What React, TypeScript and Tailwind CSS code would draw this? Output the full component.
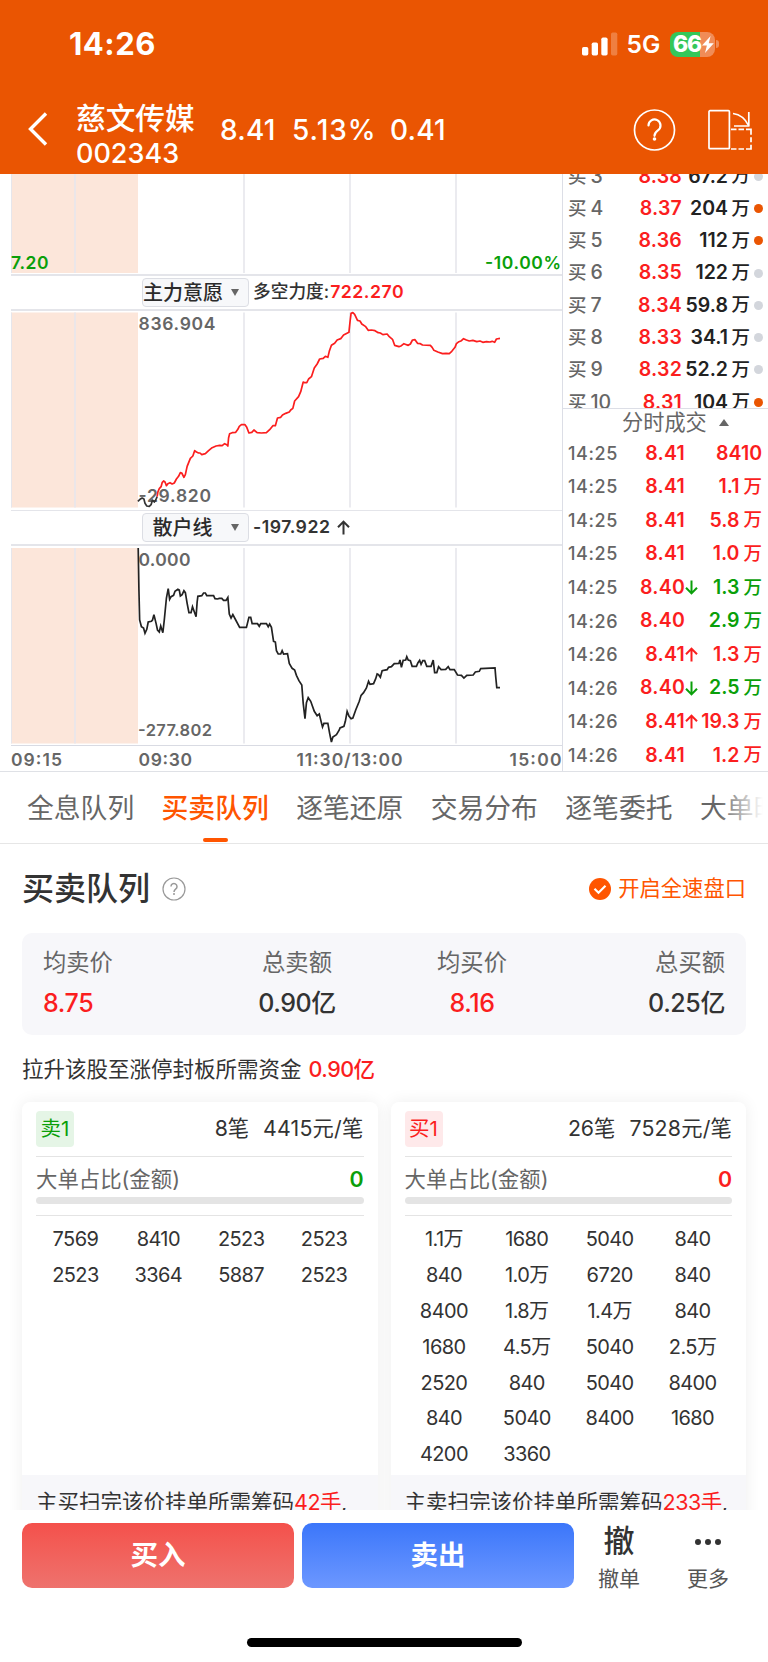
import type { ReactNode } from "react";
import clsx from "clsx";

const bids = [
  { level: 3, price: "8.38", volume: "67.2", hot: false },
  { level: 4, price: "8.37", volume: "204", hot: true },
  { level: 5, price: "8.36", volume: "112", hot: true },
  { level: 6, price: "8.35", volume: "122", hot: false },
  { level: 7, price: "8.34", volume: "59.8", hot: false },
  { level: 8, price: "8.33", volume: "34.1", hot: false },
  { level: 9, price: "8.32", volume: "52.2", hot: false },
  { level: 10, price: "8.31", volume: "104", hot: true },
];

type Trade = {
  time: string;
  price: string;
  volume: string;
  unit?: string;
  move?: "up" | "down";
  sell?: boolean;
};

const trades: Trade[] = [
  { time: "14:25", price: "8.41", volume: "8410" },
  { time: "14:25", price: "8.41", volume: "1.1", unit: "万" },
  { time: "14:25", price: "8.41", volume: "5.8", unit: "万" },
  { time: "14:25", price: "8.41", volume: "1.0", unit: "万" },
  { time: "14:25", price: "8.40", volume: "1.3", unit: "万", move: "down", sell: true },
  { time: "14:26", price: "8.40", volume: "2.9", unit: "万", sell: true },
  { time: "14:26", price: "8.41", volume: "1.3", unit: "万", move: "up" },
  { time: "14:26", price: "8.40", volume: "2.5", unit: "万", move: "down", sell: true },
  { time: "14:26", price: "8.41", volume: "19.3", unit: "万", move: "up" },
  { time: "14:26", price: "8.41", volume: "1.2", unit: "万" },
];

const tabs = ["全息队列", "买卖队列", "逐笔还原", "交易分布", "逐笔委托", "大单时序"];

const sellOrders = ["7569", "8410", "2523", "2523", "2523", "3364", "5887", "2523"];

const buyOrders = [
  "1.1万", "1680", "5040", "840",
  "840", "1.0万", "6720", "840",
  "8400", "1.8万", "1.4万", "840",
  "1680", "4.5万", "5040", "2.5万",
  "2520", "840", "5040", "8400",
  "840", "5040", "8400", "1680",
  "4200", "3360",
];

const mainForceLine =
  "440,590 442,576 446,566 451,560 454,548 458,543 462,546 466,557 470,551 476,548 482,552 488,549 494,537 500,529 505,518 509,519 515,532 519,524 524,499 533,475 540,468 545,452 550,456 556,459 560,459 565,464 575,461 584,452 594,443 605,438 615,436 622,437 629,431 635,434 638,438 640,414 643,401 650,398 660,397 666,388 670,379 676,374 686,374 691,382 697,399 705,397 711,390 720,398 732,399 746,398 755,389 764,377 771,377 777,354 786,352 791,345 800,340 810,336 814,330 820,325 825,303 836,290 842,275 849,246 853,248 859,248 864,237 872,230 880,204 888,192 895,177 905,175 911,169 918,172 922,154 928,136 937,130 944,120 954,116 962,105 977,97 980,66 983,40 988,38 993,43 1001,61 1008,63 1013,72 1024,80 1031,91 1040,90 1050,92 1059,98 1065,99 1072,104 1084,102 1090,110 1099,118 1105,136 1117,140 1124,137 1131,131 1138,134 1143,136 1149,132 1155,120 1162,119 1169,130 1177,131 1183,135 1205,136 1210,142 1215,151 1226,156 1239,161 1249,160 1258,161 1265,154 1274,142 1278,131 1285,125 1292,122 1298,116 1306,120 1314,123 1324,121 1335,125 1344,123 1352,127 1362,125 1372,126 1378,124 1385,127 1390,117 1400,115";

const retailLine =
  "387,114 389,240 391,330 396,350 402,354 406,370 411,358 415,336 424,334 427,330 431,314 437,340 441,360 446,366 450,348 456,368 460,330 466,264 471,236 475,268 479,260 486,256 490,244 498,238 502,240 505,258 510,254 515,242 519,248 524,280 529,308 535,308 539,290 543,302 549,320 552,276 554,259 565,257 570,249 575,249 579,257 598,257 602,266 609,267 614,265 621,265 626,271 633,271 638,262 642,312 647,324 652,314 660,330 671,352 690,352 697,322 702,322 706,341 721,341 726,349 730,341 746,341 751,350 755,342 760,352 766,394 771,396 774,422 779,432 786,432 790,422 794,432 805,431 810,460 818,475 825,480 830,496 837,512 845,525 849,580 854,626 858,578 863,563 870,574 880,604 888,617 894,612 899,634 903,651 907,640 918,640 923,670 928,696 932,681 942,674 950,660 952,654 963,649 967,634 972,604 977,618 983,626 988,624 996,600 1006,574 1011,556 1018,548 1026,534 1032,514 1036,523 1046,521 1052,506 1056,492 1060,494 1065,502 1070,482 1084,479 1088,472 1096,470 1104,461 1117,460 1120,450 1124,472 1129,451 1136,450 1139,440 1143,450 1149,452 1154,469 1166,469 1170,459 1175,451 1179,463 1184,452 1189,452 1195,469 1207,469 1213,450 1217,488 1223,488 1228,470 1235,479 1248,478 1255,470 1260,479 1272,479 1281,495 1292,496 1299,504 1307,496 1325,495 1331,486 1342,484 1346,476 1386,474 1388,500 1391,533 1400,533";

function ChartPane({ height, top, bottom, children }: { height: number; top: number; bottom: number; children: ReactNode }) {
  return (
    <svg className="block" width="562" height={height} viewBox={`0 0 562 ${height}`}>
      <rect x="11" y={top} width="127" height={bottom - top} fill="#fce6da" />
      {[11.5, 75, 244, 350, 456].map((x, i) => (
        <line key={x} x1={x} x2={x} y1={top} y2={bottom} stroke="#e6e6ec" strokeWidth={i === 0 ? 1 : 1.6} />
      ))}
      {children}
    </svg>
  );
}

function Label({ x, y, width, size = 17.5, fill = "#666", children }: { x: number; y: number; width: number; size?: number; fill?: string; children: string }) {
  return (
    <text x={x} y={y} textLength={width} fontSize={size} fill={fill} fontWeight="600">
      {children}
    </text>
  );
}

function IndicatorBar({ name, className, children }: { name: string; className: string; children: ReactNode }) {
  return (
    <div className={clsx("ml-[11px] flex items-center border-[#e4e5ea] pl-[131px]", className)}>
      <div className="flex h-[28.5px] w-[107px] items-center rounded-[4px] border border-[#dcdee4] bg-[#f7f8fa] text-xl font-medium text-[#2b2b2b]">
        <span className="w-[79px] text-center whitespace-nowrap">{name}</span>
        <svg className="ml-[9px]" width="8" height="7" viewBox="0 0 8 7">
          <path d="M0 0h8L4 7z" fill="#666" />
        </svg>
      </div>
      <div className="ml-[4px] flex items-center text-[17.700px] font-medium whitespace-nowrap text-[#333]">{children}</div>
    </div>
  );
}

function Arrow({ up }: { up: boolean }) {
  return (
    <svg className="shrink-0" width="13" height="15" viewBox="0 0 13 15" fill="none" stroke="currentColor" strokeWidth="2">
      <path d={up ? "M6.5 14.5V1.5M1 7.300l5.500-5.700L12 7.300" : "M6.500 .5v13M1 7.700l5.500 5.700L12 7.700"} />
    </svg>
  );
}

function Header() {
  return (
    <header className="h-[174px] bg-[#ea5502] text-white">
      <div className="flex h-[88px] items-center pl-[69px]">
        <span className="w-[512.5px] text-[31px] font-bold tracking-[0.500px]">14:26</span>
        <svg width="36" height="24" viewBox="0 0 36 24" fill="#fff">
          <rect x="0" y="15" width="6.3" height="8.5" rx="1.7" />
          <rect x="9.7" y="10.5" width="6.3" height="13" rx="1.7" />
          <rect x="19.3" y="5.5" width="6.3" height="18" rx="1.7" />
          <rect x="29" y="0.5" width="6.3" height="23" rx="1.7" opacity="0.25" />
        </svg>
        <span className="ml-[9px] w-[43.5px] text-[24.500px] font-semibold">5G</span>
        <div className="flex items-center">
          <div className="relative flex h-[25px] w-[45px] items-center rounded-[8px] bg-linear-to-r from-[#34c759] from-[67%] to-[#f08c57] to-[67%] pl-[3px]">
            <span className="text-[23px] leading-[25px] font-extrabold tracking-[-1.200px]">66</span>
            <svg className="ml-[1px] shrink-0" width="12" height="17" viewBox="0 0 12 17" fill="#fff">
              <path d="M8.6 0 0 9.6h4.9L3 17l8.8-9.8H6.7z" />
            </svg>
          </div>
          <div className="ml-[1px] h-[8px] w-[3px] rounded-r-full bg-[#f08c57]" />
        </div>
      </div>
      <div className="flex h-[86px] items-center pl-[28px]">
        <svg width="20" height="34" viewBox="0 0 20 34" fill="none" stroke="#fff" strokeWidth="3.4" className="-mt-[4px]">
          <path d="M18 1.5 2.5 17 18 32.5" />
        </svg>
        <div className="mt-[7px] ml-[28px] w-[144px] whitespace-nowrap">
          <div className="h-[35px] text-[29.700px] leading-[35px] font-medium">慈文传媒</div>
          <div className="h-[32px] text-[27px] leading-[35px] font-medium">002343</div>
        </div>
        <div className="-mt-[2px] flex text-[28px] font-medium tracking-[0.200px]">
          <span className="w-[72px]">8.41</span>
          <span className="w-[98px] tracking-[1px]">5.13%</span>
          <span className="w-[243px]">0.41</span>
        </div>
        <svg className="-mt-[3px]" width="120" height="44" viewBox="0 0 120 44" fill="none" stroke="#fff" strokeWidth="1.7">
          <circle cx="21.5" cy="22" r="20" />
          <path d="M15.5 17.5a6 6 0 1 1 9.4 4.9c-2.2 1.5-3.4 2.8-3.4 5.4" strokeWidth="2.2" strokeLinecap="round" />
          <circle cx="21.5" cy="31" r="1.8" fill="#fff" stroke="none" />
          <rect x="76" y="2.7" width="20.4" height="38" rx="1" />
          <path d="M100 5.5c7 1 12 4.500 15.500 12" />
          <path d="M115.800 4v14M101 18h15.500" />
          <path d="M98 21.300h5.500m2 0h5.500m2 0h5v5.500m0 2.500v5m0 2.500v4.200h-5m-2 0h-5.500m-2 0h-5.500" />
        </svg>
      </div>
    </header>
  );
}

function Charts() {
  return (
    <div className="w-[562px] shrink-0 overflow-hidden">
      <ChartPane height={100} top={0} bottom={99}>
        <Label x={11} y={94.500} width={37.500} fill="#0a9f0a">7.20</Label>
        <Label x={485} y={94.500} width={76} fill="#0a9f0a">-10.00%</Label>
      </ChartPane>
      <IndicatorBar name="主力意愿" className="h-[37px] border-y-2">
        <span className="mr-[1px]">多空力度:</span>
        <span className="font-semibold tracking-[0.500px] text-[#fb1e1e]">722.270</span>
      </IndicatorBar>
      <ChartPane height={199} top={1.5} bottom={196.5}>
        <Label x={138.5} y={19} width={77}>836.904</Label>
        <Label x={138.5} y={191} width={72.500}>-29.820</Label>
        <g transform="translate(0 -11) scale(0.35714 0.33333)" fill="none" strokeWidth="1.7" strokeLinejoin="round">
          <polyline vectorEffect="non-scaling-stroke" stroke="#333" points="386,604 392,598 398,594 403,597 406,610 411,618 418,619 423,614 427,600 432,606 436,600 440,590" />
          <polyline vectorEffect="non-scaling-stroke" stroke="#fb1e1e" points={mainForceLine} />
        </g>
      </ChartPane>
      <IndicatorBar name="散户线" className="h-[36px] border-t border-b-2">
        <span className="mr-[7px] font-semibold tracking-[0.500px]">-197.922</span>
        <Arrow up />
      </IndicatorBar>
      <ChartPane height={199} top={2} bottom={197.5}>
        <Label x={138.5} y={19.5} width={52}>0.000</Label>
        <Label x={138} y={190} width={74} size={16.500}>-277.802</Label>
        <g transform="translate(0 -36) scale(0.35714 0.33333)" fill="none" strokeWidth="1.7">
          <polyline vectorEffect="non-scaling-stroke" stroke="#222" points={retailLine} />
        </g>
      </ChartPane>
      <div className="ml-[11px] border-t border-[#d9dbe3]">
        <svg className="-ml-[11px] block" width="562" height="25">
          <Label x={11} y={20} width={51}>09:15</Label>
          <Label x={138.5} y={20} width={53.500}>09:30</Label>
          <Label x={296.500} y={20} width={106}>11:30/13:00</Label>
          <Label x={509.500} y={20} width={52}>15:00</Label>
        </svg>
      </div>
    </div>
  );
}

function OrderBook() {
  return (
    <div className="min-w-0 flex-1 border-l border-[#dcdee6] font-medium">
      <div className="h-[234px] overflow-hidden">
        <div className="-mt-[14px]">
          {bids.map((bid) => (
            <div key={bid.level} className="grid h-[32.300px] grid-cols-[50px_64px_46px_22px_4px_9px] items-center pl-[5px] text-[19.500px] whitespace-nowrap">
              <span className="text-[#666]">
                <span className="mr-[4px] text-[18.500px]">买</span>
                {bid.level}
              </span>
              <span className="text-right font-semibold tracking-[0.200px] text-[#fb1e1e]">{bid.price}</span>
              <span className="flex justify-end font-semibold text-[#222]">{bid.volume}</span>
              <span className="text-right text-[18.500px] text-[#222]">万</span>
              <span />
              <span className={clsx("size-[9px] rounded-full", bid.hot ? "bg-[#ea5502]" : "bg-[#d3d6dc]")} />
            </div>
          ))}
        </div>
      </div>
      <div className="flex h-[28px] items-center border-t border-[#dcdee6] pl-[59px] text-[21.200px] text-[#666]">
        <span className="font-normal">分时成交</span>
        <svg className="ml-3" width="10" height="7" viewBox="0 0 10 7">
          <path d="M0 7h10L5 0z" fill="#666" />
        </svg>
      </div>
      {trades.map((trade, i) => (
        <div key={i} className="flex h-[33.560px] items-center pt-[1px] pl-[5px] text-[19.500px] whitespace-nowrap">
          <span className="w-[53px] text-[18px] tracking-[0.600px] text-[#666]">{trade.time}</span>
          <span className="w-[64px] text-right font-semibold tracking-[0.200px] text-[#fb1e1e]">{trade.price}</span>
          <span className={clsx("flex w-[13px] justify-end", trade.move === "down" ? "text-[#0a9f0a]" : "text-[#fb1e1e]")}>
            {trade.move && <Arrow up={trade.move === "up"} />}
          </span>
          <span className={clsx("flex w-[64px] items-center justify-end font-semibold", trade.sell ? "text-[#0a9f0a]" : "text-[#fb1e1e]")}>
            {trade.volume}
            {trade.unit && <span className="ml-[4px] text-[18.500px] font-medium">{trade.unit}</span>}
          </span>
        </div>
      ))}
    </div>
  );
}

function Tabs() {
  return (
    <nav className="relative flex h-[72px] gap-[27.400px] overflow-hidden border-b border-[#e6e6e6] pl-[27px] text-[26.800px] whitespace-nowrap text-[#666]">
      {tabs.map((tab) => {
        const active = tab === "买卖队列";
        return (
          <div key={tab} className={clsx("flex shrink-0 flex-col items-center", active && "font-medium text-[#ff5500]")}>
            <span className="h-[66px] leading-[73px]">{tab}</span>
            {active && <span className="h-[4px] w-[25px] rounded-full bg-[#ff5500]" />}
          </div>
        );
      })}
      <div className="absolute inset-y-0 right-0 w-[50px] bg-linear-to-r from-white/0 to-white to-90%" />
    </nav>
  );
}

function SummaryCell({ label, value, up, className }: { label: string; value: string; up?: boolean; className?: string }) {
  return (
    <div className={clsx("flex flex-col whitespace-nowrap", className)}>
      <span className="h-[40px] text-[23.300px] leading-[40px] text-[#666]">{label}</span>
      <span className={clsx("h-[40px] text-[25px] leading-[40px] font-medium tracking-[-0.400px]", up ? "text-[#fb1e1e]" : "text-[#333]")}>
        {value}
      </span>
    </div>
  );
}

function QueueCard(props: { side: "sell" | "buy"; count: string; average: string; orders: string[]; note: string; lots: string }) {
  const { side, count, average, orders, note, lots } = props;
  const sell = side === "sell";

  return (
    <div className="flex h-[460px] flex-1 flex-col overflow-hidden rounded-[8px] bg-white shadow-[0_0_16px_rgba(0,0,0,0.07)]">
      <div className="px-[14px]">
        <div className="flex h-[55px] items-center border-b border-[#e4e4e4] text-[21.300px] text-[#333]">
          <span
            className={clsx(
              "flex h-[36px] w-[38px] items-center justify-center rounded-[4px] text-[20.500px]",
              sell ? "bg-[#e5f5e6] text-[#0a9f0a]" : "bg-[#fee9ea] text-[#fb1e1e]"
            )}>
            {sell ? "卖1" : "买1"}
          </span>
          <span className="mr-[14px] ml-auto">{count}</span>
          <span className="tracking-[0.200px]">{average}</span>
        </div>
        <div className="flex h-[38px] items-center justify-between pt-[6px] text-[21.400px] text-[#666]">
          <span>大单占比(金额)</span>
          <span className={clsx("font-semibold", sell ? "text-[#0a9f0a]" : "text-[#fb1e1e]")}>0</span>
        </div>
        <div className="mt-[2px] h-[7px] rounded-full bg-[#e4e4e4]" />
        <div className="mt-[11px] h-px bg-[#e4e4e4]" />
      </div>
      <div className="mx-[12px] mt-[6px] grid grid-cols-4 text-center text-[20px] tracking-[-0.600px] text-[#333]">
        {orders.map((order, i) => (
          <span key={i} className="h-[35.900px] leading-[35.900px]">
            {order}
          </span>
        ))}
      </div>
      <div className="mt-auto h-[87px] shrink-0 bg-[#f7f7fa] px-[14px] text-[21.500px] leading-[55px] whitespace-nowrap text-[#333]">
        {note}
        <span className="tracking-[-0.500px] text-[#fb1e1e]">{lots}</span>,
      </div>
    </div>
  );
}

function BottomBar() {
  return (
    <footer className="h-[152px] bg-white pt-[13px]">
      <div className="flex h-[65px] pl-[22px] text-[27.500px] font-bold text-white">
        <button className="w-[272px] rounded-[10px] bg-linear-to-b from-[#f4504b] to-[#ee726d]">买入</button>
        <button className="ml-[8px] w-[272px] rounded-[10px] bg-linear-to-b from-[#3b76fa] to-[#6c97ff]">卖出</button>
        <div className="ml-[13px] flex w-[64px] flex-col items-center text-[#333]">
          <span className="h-[36px] shrink-0 text-[31px] leading-[36px] font-medium">撤</span>
          <span className="h-[40px] shrink-0 text-[21px] leading-[40px] font-normal text-[#555]">撤单</span>
        </div>
        <div className="ml-[25px] flex w-[64px] flex-col items-center text-[#333]">
          <span className="flex h-[36px] shrink-0 items-center gap-[4px] pt-[1px]">
            <i className="size-[6px] rounded-full bg-[#333]" />
            <i className="size-[6px] rounded-full bg-[#333]" />
            <i className="size-[6px] rounded-full bg-[#333]" />
          </span>
          <span className="h-[40px] shrink-0 text-[21px] leading-[40px] font-normal text-[#555]">更多</span>
        </div>
      </div>
      <div className="mx-auto mt-[50px] h-[9px] w-[275px] rounded-full bg-black" />
    </footer>
  );
}

export default function App() {
  return (
    <div className="h-[1662px] w-[768px] overflow-hidden bg-white [font-family:Inter,'Noto_Sans_CJK_SC',sans-serif]">
      <Header />
      <div className="flex h-[598px] border-b border-[#dfe1e6]">
        <Charts />
        <OrderBook />
      </div>
      <Tabs />

      <main className="h-[666px] overflow-hidden px-[22px]">
        <div className="flex h-[89px] items-center text-[#333]">
          <h2 className="text-[32px] font-medium">买卖队列</h2>
          <svg className="ml-[12px]" width="24" height="24" viewBox="0 0 24 24" fill="none" stroke="#999" strokeWidth="1.200">
            <circle cx="12" cy="12" r="11" />
            <path d="M9 9.500a3 3 0 1 1 4.800 2.400c-1.200.9-1.800 1.500-1.800 3" strokeWidth="1.500" />
            <circle cx="12" cy="17" r="1" fill="#999" stroke="none" />
          </svg>
          <div className="ml-auto flex items-center gap-[7px] text-[21.300px] text-[#ff5500]">
            <svg width="22" height="22" viewBox="0 0 22 22">
              <circle cx="11" cy="11" r="11" fill="#ff5500" />
              <path d="m5.500 10.800 4 4 7-7" fill="none" stroke="#fff" strokeWidth="2.200" />
            </svg>
            开启全速盘口
          </div>
        </div>

        <section className="flex h-[102px] rounded-[10px] bg-[#f7f7fa] px-[21px] pt-[10px]">
          <SummaryCell label="均卖价" value="8.75" up className="w-[70px]" />
          <SummaryCell label="总卖额" value="0.90亿" className="ml-[134px] w-[100px] items-center" />
          <SummaryCell label="均买价" value="8.16" up className="ml-[75px] w-[100px] items-center" />
          <SummaryCell label="总买额" value="0.25亿" className="ml-auto items-end" />
        </section>

        <p className="mt-[14px] h-[40px] text-[21.500px] leading-[40px] text-[#333]">
          拉升该股至涨停封板所需资金
          <span className="ml-[7px] font-medium tracking-[-0.500px] text-[#fb1e1e]">0.90亿</span>
        </p>

        <div className="mt-[13px] flex gap-[13px]">
          <QueueCard side="sell" count="8笔" average="4415元/笔" orders={sellOrders} note="主买扫完该价挂单所需筹码" lots="42手" />
          <QueueCard side="buy" count="26笔" average="7528元/笔" orders={buyOrders} note="主卖扫完该价挂单所需筹码" lots="233手" />
        </div>
      </main>

      <BottomBar />
    </div>
  );
}
